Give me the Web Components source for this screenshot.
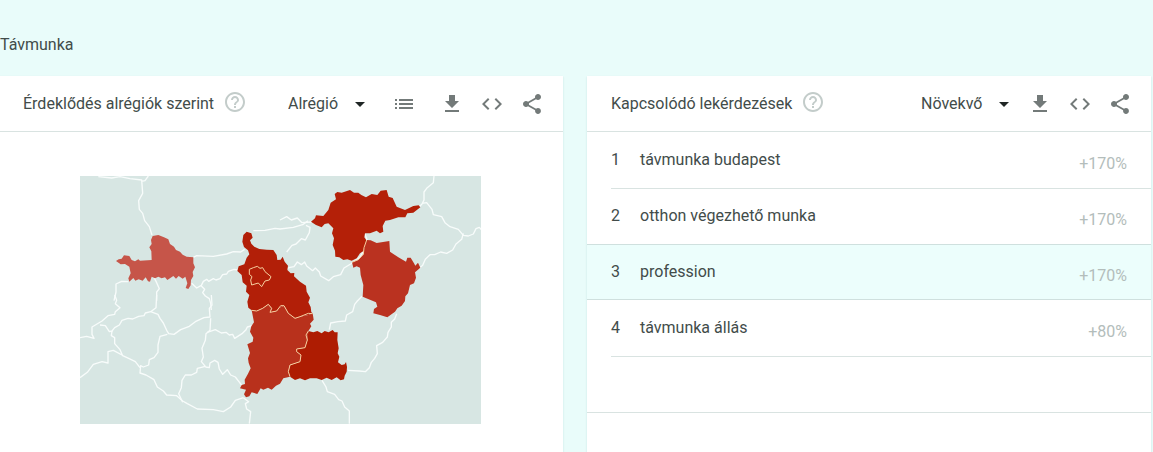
<!DOCTYPE html>
<html lang="hu">
<head>
<meta charset="utf-8">
<meta name="viewport" content="width=device-width, initial-scale=1">
<title>Távmunka</title>
<style>
body { margin: 0; background: #e9fcfa; color: #424c4a; font: 16px/24px Roboto, "Noto Sans", sans-serif; }
</style>
</head>
<body>
<trends-page>
  <h1 slot="title">Távmunka</h1>
  <trend-card>
    <span slot="title">Érdeklődés alrégiók szerint</span>
    <trend-select slot="tools" label="Felbontás" value="Alrégió"></trend-select>
    <icon-button slot="tools" class="list" icon="list" label="Lista"></icon-button>
    <icon-button slot="tools" icon="download" label="Letöltés"></icon-button>
    <icon-button slot="tools" icon="code" label="Beágyazás"></icon-button>
    <icon-button slot="tools" icon="share" label="Megosztás"></icon-button>
    <region-map></region-map>
  </trend-card>
  <trend-card>
    <span slot="title">Kapcsolódó lekérdezések</span>
    <trend-select slot="tools" label="Rendezés" value="Növekvő"></trend-select>
    <icon-button slot="tools" icon="download" label="Letöltés"></icon-button>
    <icon-button slot="tools" icon="code" label="Beágyazás"></icon-button>
    <icon-button slot="tools" icon="share" label="Megosztás"></icon-button>
    <query-list></query-list>
  </trend-card>
</trends-page>

<script>
const ICONS = {
  list: 'M3 13h2v-2H3v2zm0 4h2v-2H3v2zm0-8h2V7H3v2zm4 4h14v-2H7v2zm0 4h14v-2H7v2zM7 7v2h14V7H7z',
  download: 'M19 9h-4V3H9v6H5l7 7 7-7zM5 18v2h14v-2H5z',
  code: 'M9.4 16.6L4.8 12l4.6-4.6L8 6l-6 6 6 6 1.4-1.4zm5.2 0l4.6-4.6-4.6-4.6L16 6l6 6-6 6-1.4-1.4z',
  share: 'M18 16.08c-.76 0-1.44.3-1.96.77L8.91 12.7c.05-.23.09-.46.09-.7s-.04-.47-.09-.7l7.05-4.11c.54.5 1.25.81 2.04.81 1.66 0 3-1.34 3-3s-1.34-3-3-3-3 1.34-3 3c0 .24.04.47.09.7L8.04 9.81C7.5 9.31 6.79 9 6 9c-1.66 0-3 1.34-3 3s1.34 3 3 3c.79 0 1.5-.31 2.04-.81l7.12 4.16c-.05.21-.08.43-.08.65 0 1.61 1.31 2.92 2.92 2.92s2.92-1.31 2.92-2.92-1.31-2.92-2.92-2.92z',
  help: 'M11 18h2v-2h-2v2zm1-16C6.48 2 2 6.48 2 12s4.48 10 10 10 10-4.48 10-10S17.52 2 12 2zm0 18c-4.41 0-8-3.59-8-8s3.59-8 8-8 8 3.59 8 8-3.59 8-8 8zm0-14c-2.21 0-4 1.79-4 4h2c0-1.1.9-2 2-2s2 .9 2 2c0 2-3 1.75-3 5h2c0-2.25 3-2.5 3-5 0-2.21-1.79-4-4-4z',
  arrow: 'M7 10l5 5 5-5z'
};
const icon = name => `<svg viewBox="0 0 24 24" width="24" height="24" fill="currentColor" aria-hidden="true"><path d="${ICONS[name]}"/></svg>`;

class TrendsPage extends HTMLElement {
  constructor() {
    super();
    this.attachShadow({ mode: 'open' }).innerHTML = `
      <style>
        :host { display: flex; flex-direction: column; min-height: 100vh; }
        ::slotted(h1) { margin: 33px 0 19px; font: inherit; }
        main { flex: 1; display: grid; grid-template-columns: 1fr 1fr; gap: 24px; margin: 0 2px 0 -1px; }
      </style>
      <slot name="title"></slot>
      <main><slot></slot></main>`;
  }
}
customElements.define('trends-page', TrendsPage);

class TrendCard extends HTMLElement {
  constructor() {
    super();
    this.attachShadow({ mode: 'open' }).innerHTML = `
      <style>
        :host { display: block; min-width: 0; background: #fff; box-shadow: 0 1px 2px rgba(0, 90, 90, .14); }
        header { display: flex; align-items: center; box-sizing: border-box; height: 56px;
          padding: 0 11px 0 24px; border-bottom: 1px solid #d9e3e1; }
        h2 { margin: 0; font: inherit; white-space: nowrap; }
        .help { display: flex; margin: 0 auto 4px 9px; padding: 0; border: 0; background: none; color: #c3ccca; }
        .tools { display: flex; align-items: center; }
        ::slotted(.list) { margin: 0 8px; }
      </style>
      <header>
        <h2><slot name="title"></slot></h2>
        <button class="help" type="button" aria-label="Súgó">${icon('help')}</button>
        <div class="tools"><slot name="tools"></slot></div>
      </header>
      <slot></slot>`;
  }
}
customElements.define('trend-card', TrendCard);

class IconButton extends HTMLElement {
  connectedCallback() {
    this.attachShadow({ mode: 'open' }).innerHTML = `
      <style>
        :host { display: block; }
        button { display: flex; align-items: center; justify-content: center; width: 40px; height: 40px;
          padding: 0; border: 0; background: none; color: #737a79; cursor: pointer; }
      </style>
      <button type="button" aria-label="${this.getAttribute('label')}">${icon(this.getAttribute('icon'))}</button>`;
  }
}
customElements.define('icon-button', IconButton);

class TrendSelect extends HTMLElement {
  connectedCallback() {
    this.attachShadow({ mode: 'open' }).innerHTML = `
      <style>
        :host { display: grid; align-items: center; margin-right: 4px; }
        select, svg { grid-area: 1 / 1; }
        select { appearance: none; margin: 0; padding: 0 33px 0 0; border: 0; border-radius: 0; background: none;
          color: inherit; font: inherit; }
        svg { justify-self: end; color: #202625; pointer-events: none; }
      </style>
      <select aria-label="${this.getAttribute('label')}"><option>${this.getAttribute('value')}</option></select>
      ${icon('arrow')}`;
  }
}
customElements.define('trend-select', TrendSelect);

const QUERIES = [
  { text: 'távmunka budapest', change: '+170%' },
  { text: 'otthon végezhető munka', change: '+170%' },
  { text: 'profession', change: '+170%', active: true },
  { text: 'távmunka állás', change: '+80%' }
];

class QueryList extends HTMLElement {
  constructor() {
    super();
    const rows = QUERIES.map((q, i) => `
      <li class="${q.active ? 'active' : ''}"><div>
        <span class="rank">${i + 1}</span><a href="#">${q.text}</a><span class="change">${q.change}</span>
      </div></li>`).join('');
    this.attachShadow({ mode: 'open' }).innerHTML = `
      <style>
        :host { display: block; }
        ol { margin: 0; padding: 0; list-style: none; border-bottom: 1px solid #d9e3e1; }
        li { box-sizing: border-box; height: 56px; padding-left: 24px; }
        li > div { display: flex; align-items: center; box-sizing: border-box; height: 100%; padding: 0 24px 2px 0;
          border-top: 1px solid #d9e3e1; }
        li:first-child > div, .active > div, .active + li > div { border-top-color: transparent; }
        .active { background: #ecfefc; border: solid #cfe0de; border-width: 1px 0; }
        .rank { width: 29px; }
        a { color: inherit; text-decoration: none; }
        .change { margin-left: auto; padding-top: 8px; color: #b3bdbb; }
      </style>
      <ol>${rows}<li><div></div></li></ol>`;
  }
}
customElements.define('query-list', QueryList);

class RegionMap extends HTMLElement {
  constructor() {
    super();
    this.attachShadow({ mode: 'open' }).innerHTML = `
      <style>
        :host { display: flex; justify-content: center; padding: 44px 26px 44px 24px; }
        svg { width: 100%; max-width: 401px; height: auto; background: #d7e6e3; }
        .line { fill: none; stroke: #f8fcfb; stroke-width: 4; stroke-linejoin: round; }
        .inner { fill: none; stroke: #f6cfa0; stroke-width: 3; stroke-linejoin: round; }
      </style>
      <svg viewBox="0 0 1203 744" role="img" aria-label="Magyarország megyéi">
        <g class="line">
          <g transform="translate(0 -18)">
            <path d="M55 20L95 24 120 20 150 26 185 30 188 70 176 92 178 118 188 130 194 152 208 170 216 195M205 18L195 32 185 34"/>
            <path d="M340 262L350 257 400 259 440 252 460 245 482 246 494 238M520 182L555 181 585 175 600 177 640 172 668 164 684 152"/>
            <path d="M145 335L125 334 108 342 108 366 102 392"/>
            <path d="M222 322L230 338 238 356 230 366 230 392M335 340L350 354 364 346 370 334 380 328 386 334 400 326 408 330 420 326 428 314 440 312 445 304 462 298 474 300"/>
            <path d="M364 348L374 358 368 368 376 378 388 386 392 400 394 420"/>
          </g>
          <g transform="translate(600 -18)">
            <path d="M462 18L460 38 440 55 432 66 432 90 426 102 418 110M426 100L440 98 456 118 460 134 485 140 495 158 510 170 535 178 550 196 565 198 580 192 588 176 598 172 608 184"/>
            <path d="M550 190L545 208 528 222 518 240 500 250 482 246 464 254 450 254 436 268 428 286 416 296"/>
            <path d="M0 150L20 140 34 150 52 144 66 158 95 156M20 246L36 226 48 222 64 206 76 210 88 188 90 172 78 166"/>
            <path d="M10 300L30 292 42 290 52 276 64 284 74 276 80 288 98 302 106 294 118 306 122 318 146 332 160 320 182 314 192 294 212 282 228 270 240 262 252 240 262 215"/>
            <path d="M255 192L262 212"/>
          </g>
          <g transform="translate(0 357)">
            <path d="M104 0L110 16 106 26 120 38 106 50 104 58 84 62 66 78 36 96 36 118 42 130 20 124 0 128"/>
            <path d="M60 90L76 92 88 110 96 108 104 98 118 90 126 76 144 70 158 72 176 64 192 62 196 54 212 50 228 38 230 0"/>
            <path d="M212 50L234 58 240 70 250 84 260 106 266 116 282 118 302 104 328 94 346 80 372 68 390 66 388 40 396 30 394 0"/>
            <path d="M96 108L94 122 104 128 104 146 120 164 128 182 146 190 166 200 180 218M0 248L22 232 40 208 66 200 84 204 84 170 100 166 126 180"/>
            <path d="M262 118L240 124 234 150 234 172 222 188 208 194 206 210 190 216 182 212 180 234 198 240 222 254 232 276 250 288 260 300 290 302 308 318 322 326 352 342 400 344 430 350 452 336 466 316 490 308"/>
            <path d="M308 322L296 296 304 278 306 256 316 240 334 240 350 232 352 220 376 214 364 200 370 186 366 160 376 136 378 116 390 106 392 70"/>
            <path d="M382 112L406 104 424 114 438 112 448 120 458 118 464 130 486 116 498 104 502 96 516 92"/>
            <path d="M376 216L388 218 390 204 404 196 414 202 418 222 428 238 442 224 452 240 466 246 486 272M490 308L506 320 496 326 500 342 512 350 508 386"/>
          </g>
          <g transform="translate(600 357)">
            <path d="M246 4L232 18 224 28 218 50 200 60 196 78 174 80 152 84 148 104M350 56L344 72 334 82 334 96 324 112 322 126 308 142 290 152 292 176 284 190 274 202 268 218 256 230 238 228 204 226"/>
            <path d="M126 256L138 276 142 290 164 298 176 314 186 318 194 336 208 348 208 386"/>
          </g>
        </g>
        <path transform="translate(0 -18)" fill="#c65549" d="M108 273L116 268 125 266 132 256 148 258 155 270 165 274 175 268 180 272 215 270 214 244 208 232 215 222 213 210 218 198 235 195 252 202 265 208 270 222 282 230 288 240 300 245 308 254 320 260 340 262 340 280 345 292 338 306 340 318 333 330 332 346 325 357 317 354 322 340 316 320 308 326 296 318 288 326 280 318 262 330 255 322 245 325 235 320 225 325 215 320 210 335 204 334 197 322 188 332 176 328 166 332 160 324 148 335 145 325 152 310 148 290 135 282 122 283z"/>
        <g transform="translate(360 147)">
          <path fill="#b21f08" d="M140 20L154 25 158 38 150 46 154 56 163 65 178 72 200 74 220 75 230 90 232 105 242 104 248 95 254 110 264 122 262 135 272 145 283 144 282 154 300 170 318 182 320 200 330 218 325 232 332 246 334 262 338 265 325 270 300 275 285 280 265 265 252 242 235 250 230 258 212 262 215 250 205 238 188 250 170 258 155 256 145 248 142 230 148 210 138 200 140 182 128 172 125 150 112 138 116 124 133 118 140 98 148 88 144 76 132 66 127 50 130 30z"/>
          <path fill="#b8311c" d="M155 256L170 258 188 250 205 238 215 250 212 262 230 258 235 250 252 242 265 265 285 280 300 275 325 270 338 265 341 284 330 296 334 304 325 318 322 345 315 368 290 372 290 380 303 390 300 410 270 420 265 440 270 455 250 460 240 476 228 482 215 494 204 488 190 494 182 490 172 507 155 502 148 514 138 517 132 508 138 494 120 490 125 480 135 477 134 464 144 446 152 430 146 414 144 400 150 384 142 358 158 350 160 338 150 320 154 304 162 292z"/>
          <path fill="#ae1c02" d="M325 318L340 322 352 318 365 325 374 318 386 322 398 315 404 322 413 322 412 345 416 370 413 385 418 395 414 412 425 420 434 418 438 411 441 426 440 440 434 452 432 463 422 466 410 457 395 465 380 458 365 465 350 460 330 460 315 466 300 460 285 465 270 455 265 440 270 420 300 410 303 390 290 380 290 372 315 368 322 345z"/>
          <path class="inner" d="M155 256L170 258 188 250 205 238 215 250 210 262 230 258 242 242 252 242 265 265 285 280 300 275 325 265 338 266M325 318L318 330 322 345 315 368 290 372 290 380 303 390 300 410 270 420 265 440 270 455M148 133L160 128 172 124 180 130 188 128 195 140 213 155 208 165 195 168 185 185 175 174 155 180 152 165 156 155 148 148z"/>
        </g>
        <path transform="translate(600 -18)" fill="#b42008" d="M93 155L105 145 108 136 130 138 145 120 152 98 168 88 164 72 172 66 185 68 210 60 222 68 235 68 244 75 258 82 275 72 292 75 302 62 320 60 326 80 338 84 350 110 375 120 400 108 416 106 421 112 400 128 382 130 376 142 355 142 330 150 316 152 308 168 310 185 300 190 290 182 270 190 255 190 253 202 262 215 255 240 240 250 230 265 215 272 202 268 190 270 178 262 166 260 165 242 158 225 162 205 156 190 160 175 145 160 134 162 125 172 108 165z"/>
        <path transform="translate(780 147)" fill="#ba3220" d="M80 45L92 46 110 54 148 48 150 80 175 97 198 110 202 98 212 98 222 115 226 122 234 113 241 128 225 142 228 158 222 175 210 180 204 205 196 214 195 228 185 242 172 250 165 260 142 277 120 270 100 265 102 252 112 245 108 232 68 215 70 180 62 150 60 128 50 124 40 128 36 112 55 104 70 88 72 68z"/>
        <path class="inner" transform="translate(780 147)" d="M80 45L72 68 70 88 55 104 36 112"/>
      </svg>`;
  }
}
customElements.define('region-map', RegionMap);
</script>
</body>
</html>
